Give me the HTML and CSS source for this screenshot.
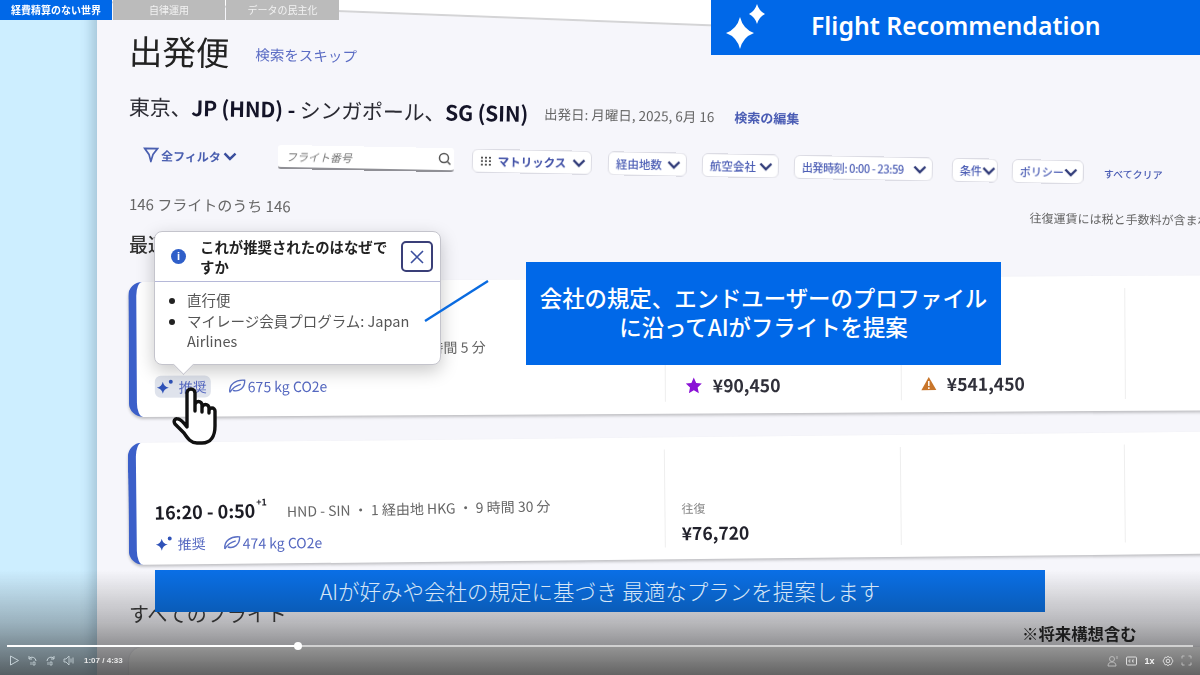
FILE: index.html
```html
<!DOCTYPE html>
<html lang="ja">
<head>
  <meta charset="UTF-8"/>
  <title>Flight Recommendation</title>
  <link rel="stylesheet" href="styles.css">
</head>
<body>
<div class="stage">
  <div class="side"></div>

  <!-- captured app -->
  <main class="app">
    <div class="title-row">
      <h1>出発便</h1>
      <a class="skip">検索をスキップ</a>
    </div>

    <div class="route-row">
      <h2>東京、<b>JP (HND) -</b> シンガポール、<b>SG (SIN)</b></h2>
      <span class="date">出発日: 月曜日, 2025, 6月 16</span>
      <a class="edit">検索の編集</a>
    </div>

    <div class="filter-row">
      <a class="all-filter">
        <svg width="16" height="16" viewBox="0 0 16 16"><path d="M1.5 2h13L10 8l-2 7-2-7z" fill="none" stroke="#4a5fb0" stroke-width="1.7"/></svg>
        全フィルタ
        <svg class="chev" width="14" height="9" viewBox="0 0 14 9"><path d="M1.5 1.5 7 7l5.500-5.500" fill="none" stroke="#3b4f9e" stroke-width="2.400"/></svg>
      </a>
      <div class="search">
        <span>フライト番号</span>
        <svg width="14" height="14" viewBox="0 0 14 14"><circle cx="6" cy="6" r="4.500" fill="none" stroke="#555" stroke-width="1.500"/><path d="m9.500 9.500 3 3" stroke="#555" stroke-width="1.500"/></svg>
      </div>
      <a class="pill p-matrix"><i class="dots"></i>マトリックス<svg class="chev" width="14" height="9" viewBox="0 0 14 9"><path d="M1.5 1.5 7 7l5.500-5.500" fill="none" stroke="#2f3a78" stroke-width="2.400"/></svg></a>
      <a class="pill p-stops">経由地数<svg class="chev" width="14" height="9" viewBox="0 0 14 9"><path d="M1.5 1.5 7 7l5.500-5.500" fill="none" stroke="#2f3a78" stroke-width="2.400"/></svg></a>
      <a class="pill p-air">航空会社<svg class="chev" width="14" height="9" viewBox="0 0 14 9"><path d="M1.5 1.5 7 7l5.500-5.500" fill="none" stroke="#2f3a78" stroke-width="2.400"/></svg></a>
      <a class="pill p-time">出発時刻: 0:00 - 23:59<svg class="chev" width="14" height="9" viewBox="0 0 14 9"><path d="M1.5 1.5 7 7l5.500-5.500" fill="none" stroke="#2f3a78" stroke-width="2.400"/></svg></a>
      <a class="pill p-cond">条件<svg class="chev" width="14" height="9" viewBox="0 0 14 9"><path d="M1.5 1.5 7 7l5.500-5.500" fill="none" stroke="#2f3a78" stroke-width="2.400"/></svg></a>
      <a class="pill p-policy">ポリシー<svg class="chev" width="14" height="9" viewBox="0 0 14 9"><path d="M1.5 1.5 7 7l5.500-5.500" fill="none" stroke="#2f3a78" stroke-width="2.400"/></svg></a>
      <a class="clear">すべてクリア</a>
    </div>

    <div class="count-row">
      <span>146 フライトのうち 146</span>
      <span class="tax">往復運賃には税と手数料が含まれ</span>
    </div>

    <h3 class="best">最適なフライト</h3>

    <section class="card card-first">
      <div class="flight">
        <div class="meta meta-first"><span>HND - SIN ・ 直行便 ・ 7 時間 5 分</span></div>
        <div class="tags">
          <span class="tag tag-on">
            <svg width="20" height="16" viewBox="0 0 20 16"><path d="M7 3Q8 8 13 9 8 10 7 15 6 10 1 9 6 8 7 3z" fill="#2f52b8"/><circle cx="15" cy="3" r="2" fill="#2f52b8"/></svg>
            推奨
          </span>
          <span class="tag co2">
            <svg width="18" height="16" viewBox="0 0 18 16"><path d="M2 14C1 6 8 1 17 2c0 8-6 12-12 10M2 14C5 9 9 7 13 6" fill="none" stroke="#5a6fc4" stroke-width="1.400"/></svg>
            675 kg CO2e
          </span>
        </div>
      </div>
      <div class="fare">
        <div class="price">
          <svg width="18" height="18" viewBox="0 0 18 18"><path d="m9 1 2.400 5.400 5.600.6-4.200 3.900 1.200 5.800L9 13.800 4 16.700l1.200-5.800L1 7l5.600-.6z" fill="#8a12d6"/></svg>
          ¥90,450
        </div>
      </div>
      <div class="fare">
        <div class="price">
          <svg width="16" height="15" viewBox="0 0 16 15"><path d="M8 1 15.500 14H.5z" fill="#c8752a"/><path d="M8 5v5M8 11.200v1.600" stroke="#fff" stroke-width="1.500"/></svg>
          ¥541,450
        </div>
      </div>
      <div class="fare fare-last"></div>
    </section>

    <section class="card card-second">
      <div class="flight">
        <div class="meta">
          <strong class="time">16:20 - 0:50<sup>+1</sup></strong>
          <span>HND - SIN ・ 1 経由地 HKG ・ 9 時間 30 分</span>
        </div>
        <div class="tags">
          <span class="tag">
            <svg width="20" height="16" viewBox="0 0 20 16"><path d="M7 3Q8 8 13 9 8 10 7 15 6 10 1 9 6 8 7 3z" fill="#2f52b8"/><circle cx="15" cy="3" r="2" fill="#2f52b8"/></svg>
            推奨
          </span>
          <span class="tag co2">
            <svg width="18" height="16" viewBox="0 0 18 16"><path d="M2 14C1 6 8 1 17 2c0 8-6 12-12 10M2 14C5 9 9 7 13 6" fill="none" stroke="#5a6fc4" stroke-width="1.400"/></svg>
            474 kg CO2e
          </span>
        </div>
      </div>
      <div class="fare">
        <div class="fare-label">往復</div>
        <div class="price price-plain">¥76,720</div>
      </div>
      <div class="fare"></div>
      <div class="fare fare-last"></div>
    </section>

    <h3 class="all-flights">すべてのフライト</h3>
    <section class="card card-third"></section>
  </main>

  <!-- slide overlays -->
  <nav class="tabs">
    <a class="tab tab-on">経費精算のない世界</a>
    <a class="tab">自律運用</a>
    <a class="tab">データの民主化</a>
  </nav>

  <div class="banner">
    <svg width="42" height="50" viewBox="0 0 42 50"><path d="M15 14Q18 26 29 30 18 34 15 46 12 34 1 30 12 26 15 14z" fill="#fff"/><path d="M32 1Q34 8 40 11 34 14 32 21 30 14 24 11 30 8 32 1z" fill="#fff"/></svg>
    <span>Flight Recommendation</span>
  </div>

  <div class="why">
    <div class="why-head">
      <span class="info">i</span>
      <strong>これが推奨されたのはなぜですか</strong>
      <span class="why-close">
        <svg width="16" height="16" viewBox="0 0 16 16"><path d="m2 2 12 12M14 2 2 14" stroke="#3b4f9e" stroke-width="1.600"/></svg>
      </span>
    </div>
    <ul>
      <li>直行便</li>
      <li>マイレージ会員プログラム: Japan Airlines</li>
    </ul>
  </div>

  <svg class="leader" width="65" height="42" viewBox="0 0 65 42"><path d="M1 41 64 1" stroke="#0a6be0" stroke-width="2.400"/></svg>

  <div class="note">会社の規定、エンドユーザーのプロファイル<br>に沿ってAIがフライトを提案</div>

  <svg class="hand" width="50" height="60" viewBox="0 0 50 60"><path d="M16 33V6a4 4 0 0 1 8 0v18-6a3.500 3.500 0 0 1 7 0v7-4a3.500 3.500 0 0 1 7 0v5-2a3 3 0 0 1 6 0v15c0 10-4 17-13 17h-5c-6 0-9-4-13-10L4 37c-2-3 0-6 3-5 3 0 6 4 9 8z" fill="#fff" stroke="#111" stroke-width="3.400" stroke-linejoin="round"/></svg>

  <div class="scrim"></div>

  <div class="caption">AIが好みや会社の規定に基づき 最適なプランを提案します</div>
  <div class="future">※将来構想含む</div>

  <footer class="player">
    <div class="track"><div class="track-done"></div><div class="knob"></div></div>
    <div class="controls">
      <svg width="11" height="11" viewBox="0 0 11 11"><path d="M1.500 1v9l8-4.500z" fill="none" stroke="#c4d0d6" stroke-width="1"/></svg>
      <svg width="11" height="11" viewBox="0 0 11 11"><path d="M2 3.500A4 4 0 0 1 9 6M2 1v3h3" fill="none" stroke="#c4d0d6"/><path d="M4 7v3M6 7h2v3H6z" fill="none" stroke="#c4d0d6" stroke-width=".8"/></svg>
      <svg width="11" height="11" viewBox="0 0 11 11"><path d="M9 3.500A4 4 0 0 0 2 6M9 1v3H6" fill="none" stroke="#c4d0d6"/><path d="M3 7v3M5 7h2v3H5z" fill="none" stroke="#c4d0d6" stroke-width=".8"/></svg>
      <svg width="11" height="11" viewBox="0 0 11 11"><path d="M1 4v3h2l3 3V1L3 4zM8 3.500v4M10 2.500v6" fill="none" stroke="#c4d0d6" stroke-width=".9"/></svg>
      <span class="clock">1:07 / 4:33</span>
      <span class="spacer"></span>
      <svg width="12" height="12" viewBox="0 0 12 12"><circle cx="5" cy="4" r="2.500" fill="none" stroke="#bbb"/><path d="M1 11c0-3 2-4 4-4s4 1 4 4zM10 1v3" fill="none" stroke="#bbb"/></svg>
      <svg width="11" height="10" viewBox="0 0 11 10"><rect x=".5" y="1" width="10" height="8" rx="1" fill="none" stroke="#ddd"/><path d="M4.500 4H3v2h1.500M8 4H6.500v2H8" fill="none" stroke="#ddd" stroke-width=".8"/></svg>
      <span class="speed">1x</span>
      <svg width="12" height="12" viewBox="0 0 12 12"><circle cx="6" cy="6" r="1.800" fill="none" stroke="#ddd"/><path d="M6 1l1 1.500 2-.3.800 1.800L11 6l-1.200 2-.8 1.800-2-.3L6 11l-1-1.500-2 .3L2.200 8 1 6l1.200-2L3 2.200l2 .3z" fill="none" stroke="#ddd" stroke-width=".9"/></svg>
      <svg width="11" height="11" viewBox="0 0 11 11"><path d="M1 3.500V1h2.500M7.500 1H10v2.500M10 7.500V10H7.500M3.500 10H1V7.500" fill="none" stroke="#bbb"/></svg>
    </div>
  </footer>
</div>
</body>
</html>
```

FILE: styles.css
```css
* {
  box-sizing: border-box;
}

body {
  margin: 0;
  background: #fff;
  font-family: "Noto Sans CJK JP", "Noto Sans", sans-serif;
  color: #222;
}

a {
  color: inherit;
}

.stage {
  position: relative;
  width: 1200px;
  height: 675px;
  overflow: hidden;
  display: flex;
  background: #cdeeff;
}

.side {
  width: 97px;
  flex: none;
}

/* the app is a tilted video capture, so rows carry small rotations */
.app {
  position: relative;
  flex: 1;
  min-width: 0;
  height: 675px;
  padding: 24px 0 0 32px;
  background: #f6f6fb;
  box-shadow: -6px 0 10px rgba(60, 90, 110, 0.25);
  overflow: hidden;
  filter: blur(0.35px);
}

.app::before {
  content: "";
  position: absolute;
  left: -20px;
  top: -66px;
  width: 1300px;
  height: 66px;
  background: #fff;
  border-bottom: 2px solid #d4d4d6;
  transform: rotate(2.2deg);
  transform-origin: left bottom;
}

.title-row,
.route-row,
.count-row {
  display: flex;
  align-items: center;
  transform-origin: left center;
  white-space: nowrap;
}

.title-row {
  position: relative;
  height: 50px;
  gap: 26px;
  transform: rotate(1deg);
}

h1 {
  margin: 0;
  font-size: 33.500px;
  font-weight: 400;
  color: #222;
}

.skip {
  font-size: 14.500px;
  margin-top: 4px;
  color: #5b6cc4;
}

.route-row {
  height: 36px;
  margin-top: 14px;
  transform: rotate(1deg);
}

h2 {
  margin: 0;
  font-size: 21px;
  font-weight: 400;
  color: #2b2b33;
  letter-spacing: -0.2px;
}

h2 b {
  font-weight: 700;
  color: #141428;
}

.date {
  margin-left: 16px;
  font-size: 13.500px;
  color: #666;
}

.edit {
  margin-left: 20px;
  font-size: 13px;
  font-weight: 700;
  color: #4a5cb4;
}

.filter-row {
  display: flex;
  align-items: center;
  height: 30px;
  margin-top: 15px;
  padding-left: 14px;
  transform: rotate(1.1deg);
  transform-origin: left center;
  white-space: nowrap;
}

.all-filter {
  display: flex;
  align-items: center;
  gap: 2px;
  width: 135px;
  font-size: 12px;
  font-weight: 700;
  color: #4a5fb0;
}

.search {
  display: flex;
  align-items: center;
  justify-content: space-between;
  width: 176px;
  height: 24px;
  padding: 0 2px 0 8px;
  margin-right: 18px;
  background: #fff;
  border-bottom: 2px solid #8f8f95;
  border-radius: 3px;
  font-size: 11px;
  font-style: italic;
  color: #777;
}

.chev {
  flex: none;
}

.pill {
  display: flex;
  align-items: center;
  justify-content: space-between;
  height: 24px;
  margin-right: 15px;
  padding: 0 5px 0 7px;
  background: #fff;
  border: 1px solid #dcdce4;
  border-radius: 6px;
  font-size: 11.500px;
  font-weight: 500;
  color: #4a5cb4;
}

.p-matrix {
  width: 120px;
  margin-right: 16px;
  color: #3f4fa6;
  font-weight: 700;
}

.p-stops {
  width: 79px;
}

.p-air {
  width: 77px;
}

.p-time {
  width: 139px;
  margin-right: 19px;
  font-size: 11px;
  letter-spacing: -0.4px;
}

.p-cond {
  width: 46px;
  margin-right: 14px;
  font-size: 11px;
}

.p-policy {
  width: 72px;
  margin-right: 20px;
  font-size: 11px;
}

.clear {
  font-size: 10px;
  font-weight: 500;
  color: #4a5cb4;
}

.dots {
  width: 12px;
  height: 10px;
  background-image: radial-gradient(circle, #444 1px, transparent 1.2px);
  background-size: 4px 3.5px;
}

.count-row {
  height: 24px;
  margin-top: 22px;
  font-size: 15px;
  color: #666;
  transform: rotate(0.8deg);
}

.tax {
  margin-left: 739px;
  margin-top: 2px;
  font-size: 12px;
  color: #666;
}

.best {
  margin: 16px 0 0;
  height: 26px;
  font-size: 19px;
  font-weight: 500;
  line-height: 26px;
  color: #333;
}

.card {
  display: flex;
  width: 1100px;
  background: #fff;
  border-left: 8px solid #3b5fc9;
  border-radius: 14px 0 0 14px;
  box-shadow: 0 2px 3px rgba(0, 0, 0, 0.22);
}

.card-first {
  height: 135px;
  margin-top: 25px;
  transform: rotate(-0.35deg);
  transform-origin: left bottom;
}

.card-second {
  height: 122px;
  margin-top: 26px;
  transform: rotate(-0.6deg);
  transform-origin: left bottom;
}

.card-third {
  height: 80px;
  margin-top: 18px;
  border-left-color: #fff;
  box-shadow: 0 0 2px rgba(0, 0, 0, 0.15);
}

.flight {
  display: flex;
  flex-direction: column;
  justify-content: flex-end;
  flex: none;
  width: 528px;
  padding: 0 0 10px 18px;
}

.card-first .flight {
  padding-bottom: 19px;
}

.meta {
  display: flex;
  align-items: baseline;
  gap: 20px;
  font-size: 14px;
  color: #666;
  white-space: nowrap;
  transform: rotate(-0.6deg);
  transform-origin: left center;
}

.meta-first {
  justify-content: flex-end;
  padding-right: 179px;
  margin-bottom: 9px;
}

.time {
  font-size: 18px;
  font-weight: 700;
  color: #1c1c24;
}

.time sup {
  position: relative;
  top: -5px;
  font-size: 9px;
  line-height: 0;
  margin-left: 1px;
}

.tags {
  display: flex;
  align-items: center;
  gap: 17px;
  margin-top: 8px;
}

.meta-first + .tags {
  margin-top: 5px;
}

.tag {
  display: flex;
  align-items: center;
  gap: 3px;
  height: 22px;
  font-size: 14px;
  color: #5568c0;
  white-space: nowrap;
}

.tag-on {
  padding: 0 4px 0 1px;
  background: #dfe3ec;
  border-radius: 6px;
}

.co2 svg {
  margin-right: -1px;
}

.fare {
  display: flex;
  flex-direction: column;
  justify-content: flex-end;
  flex: none;
  width: 236px;
  margin: 12px 0 12px;
  padding: 0 0 4px 19px;
  border-left: 1px solid #eeeeee;
}

.card-first .fare:nth-child(3) {
  width: 224px;
}

.card-second .fare {
  padding: 0 0 2px 16px;
}

.card-second .fare:nth-child(3) {
  width: 224px;
}

.fare-last {
  width: 90px;
}

.fare-label {
  font-size: 12px;
  color: #888;
  margin-bottom: 4px;
}

.price {
  display: flex;
  align-items: center;
  gap: 10px;
  font-size: 17.500px;
  font-weight: 700;
  color: #30303a;
}

.price-plain {
  color: #22222c;
}

.all-flights {
  position: relative;
  margin: 34px 0 0;
  font-size: 20px;
  font-weight: 400;
  line-height: 30px;
  color: #333;
}

.tabs {
  position: absolute;
  left: 0;
  top: 0;
  display: flex;
  gap: 1px;
}

.tab {
  width: 112px;
  height: 20px;
  background: #bbbbbb;
  color: #f2f2f2;
  font-size: 10px;
  line-height: 20px;
  text-align: center;
}

.tab:nth-child(3) {
  width: 113px;
}

.tab-on {
  background: #0068e8;
  color: #fff;
  font-weight: 700;
}

.banner {
  position: absolute;
  left: 711px;
  top: 0;
  display: flex;
  align-items: center;
  width: 489px;
  height: 55px;
  padding-left: 14px;
  background: #0068e8;
  color: #fff;
}

.banner span {
  margin-left: 44px;
  margin-bottom: 5px;
  font-family: "Noto Sans", sans-serif;
  font-size: 24.800px;
  font-weight: 600;
}

.why {
  position: absolute;
  left: 154px;
  top: 231px;
  width: 287px;
  height: 134px;
  background: #fff;
  border: 1px solid #c4c4cc;
  border-radius: 8px;
  box-shadow: 0 6px 18px rgba(0, 0, 0, 0.22);
  filter: blur(0.3px);
}

.why::after {
  content: "";
  position: absolute;
  left: 21px;
  bottom: -8px;
  width: 14px;
  height: 14px;
  background: #fff;
  border-right: 1px solid #c4c4cc;
  border-bottom: 1px solid #c4c4cc;
  transform: rotate(45deg);
}

.why-head {
  display: flex;
  align-items: center;
  height: 50px;
  padding: 0 7px 0 16px;
  border-bottom: 1px solid #b5b8d8;
}

.info {
  flex: none;
  width: 15px;
  height: 15px;
  border-radius: 50%;
  background: #2f5fc9;
  color: #fff;
  font-family: "Liberation Sans", sans-serif;
  font-size: 11px;
  font-weight: 700;
  line-height: 15px;
  text-align: center;
}

.why-head strong {
  flex: 1;
  margin-left: 14px;
  font-size: 14.400px;
  font-weight: 700;
  line-height: 20px;
  color: #222;
}

.why-close {
  display: flex;
  align-items: center;
  justify-content: center;
  flex: none;
  width: 32px;
  height: 31px;
  margin-left: 6px;
  border: 2px solid #3a3f78;
  border-radius: 5px;
}

.why ul {
  margin: 8px 0 0;
  padding: 0 24px 0 32px;
  font-size: 14.500px;
  line-height: 20.500px;
  color: #555;
}

.why li::marker {
  color: #222;
}

.leader {
  position: absolute;
  left: 424px;
  top: 280px;
}

.note {
  position: absolute;
  left: 526px;
  top: 262px;
  width: 475px;
  height: 103px;
  padding-top: 21px;
  background: #0068e8;
  color: #fff;
  font-size: 22.400px;
  font-weight: 500;
  line-height: 29px;
  text-align: center;
}

.hand {
  position: absolute;
  left: 171px;
  top: 387px;
}

.scrim {
  position: absolute;
  left: 0;
  right: 0;
  bottom: 0;
  height: 105px;
  background: linear-gradient(to bottom, rgba(40, 40, 40, 0), rgba(40, 40, 40, 0.3) 50%, rgba(40, 40, 40, 0.72));
}

.caption {
  position: absolute;
  left: 155px;
  top: 570px;
  width: 890px;
  height: 42px;
  background: linear-gradient(to bottom, #0a6fe6, #0a5cb8);
  color: #d6e6f6;
  font-size: 21.500px;
  font-weight: 300;
  line-height: 42px;
  text-align: center;
}

.future {
  position: absolute;
  left: 1022px;
  top: 622px;
  font-size: 16.400px;
  font-weight: 700;
  line-height: 22px;
  color: #1c1c1c;
}

.player {
  position: absolute;
  left: 7px;
  right: 7px;
  top: 645px;
}

.track {
  position: relative;
  height: 2px;
  background: rgba(225, 225, 225, 0.8);
}

.track-done {
  width: 291px;
  height: 2px;
  background: #fff;
}

.knob {
  position: absolute;
  left: 287px;
  top: -3px;
  width: 8px;
  height: 8px;
  border-radius: 50%;
  background: #fff;
}

.controls {
  display: flex;
  align-items: center;
  gap: 7px;
  height: 11px;
  margin-top: 8px;
  padding: 0 1px 0 2px;
}

.clock {
  margin-left: 3px;
  font-family: "Liberation Sans", sans-serif;
  font-size: 8px;
  font-weight: 700;
  color: #e8e8e8;
}

.spacer {
  flex: 1;
}

.speed {
  width: 11px;
  font-family: "Liberation Sans", sans-serif;
  font-size: 9px;
  font-weight: 700;
  text-align: center;
  color: #f2f2f2;
}
```
